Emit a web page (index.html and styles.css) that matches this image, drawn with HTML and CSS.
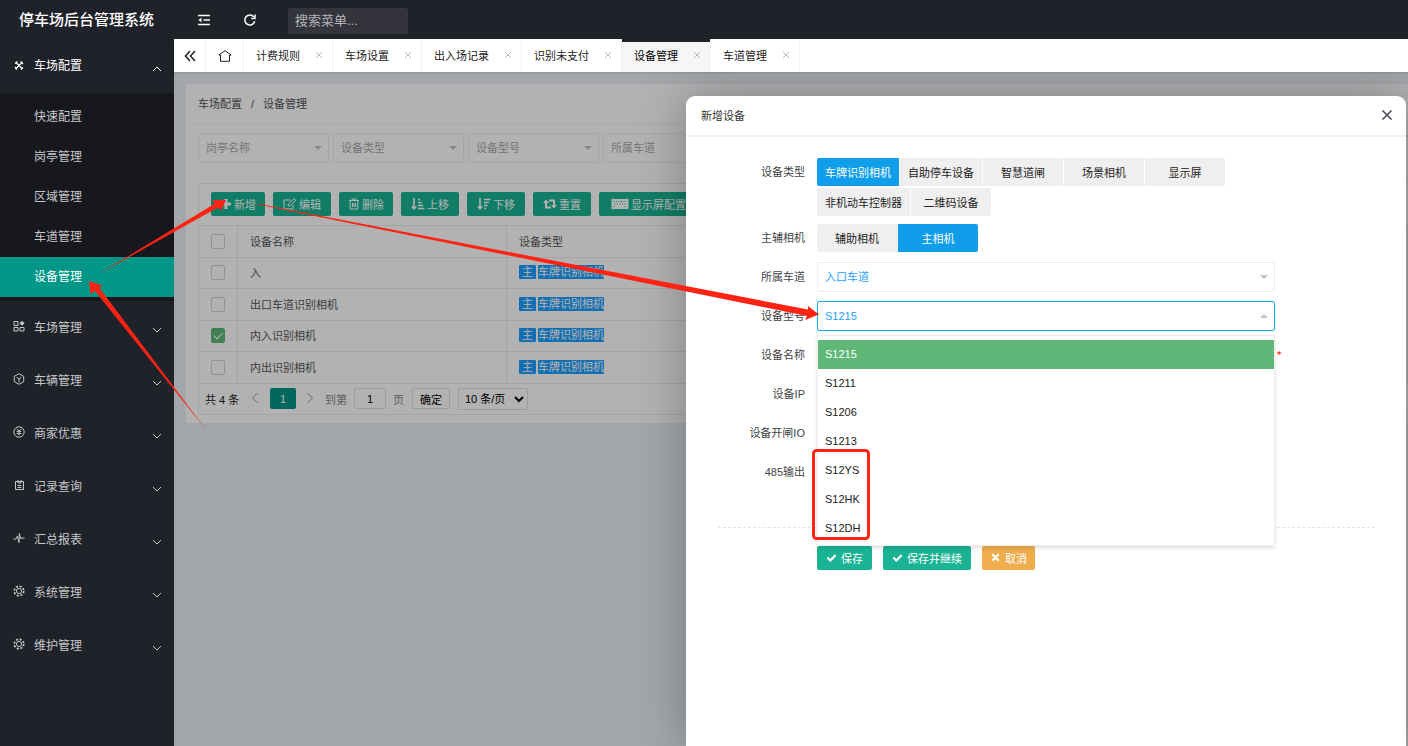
FILE: index.html
```html
<!DOCTYPE html>
<html lang="zh-CN">
<head>
<meta charset="utf-8">
<meta name="viewport" content="width=device-width, initial-scale=1">
<title>停车场后台管理系统</title>
<link rel="stylesheet" href="styles.css">
</head>
<body>
<svg class="defs" aria-hidden="true">
  <symbol id="i-down" viewBox="0 0 10 10"><path d="M1 3l4 4 4-4"/></symbol>
  <symbol id="i-up" viewBox="0 0 10 10"><path d="M1 7l4-4 4 4"/></symbol>
  <symbol id="i-x" viewBox="0 0 10 10"><path d="M2 2l6 6M8 2l-6 6"/></symbol>
  <symbol id="i-gear" viewBox="0 0 12 12"><circle cx="6" cy="6" r="2.6"/><circle cx="6" cy="6" r="4.7" stroke-width="1.700" stroke-dasharray="2.100 1.590"/></symbol>
</svg>
<div class="app">
  <aside class="side">
    <h1 class="logo">停车场后台管理系统</h1>
    <nav>
      <ul class="menu">
        <li>
          <button class="item open"><svg class="ico" viewBox="0 0 12 12"><path d="M3 3.500l6.500 6.500M9.500 3L2.500 10M2 4.500l2.500-2M7.500 2.500l2.500 2.500M2 8l2 2.500M8 10.500l2-2" stroke-width="1.300"/></svg>车场配置<svg class="chev"><use href="#i-up"/></svg></button>
          <ul class="sub">
            <li><a href="#">快速配置</a></li>
            <li><a href="#">岗亭管理</a></li>
            <li><a href="#">区域管理</a></li>
            <li><a href="#">车道管理</a></li>
            <li><a href="#" class="on">设备管理</a></li>
          </ul>
        </li>
        <li><button class="item"><svg class="ico" viewBox="0 0 12 12"><path d="M1 1.500h4v4H1zM1 7.500h4v3.500H1zM7 7.500h4v3.500H7z"/><path d="M9 .8l2.500 2.500L9 5.800 6.500 3.300z" fill="currentColor" stroke="none"/></svg>车场管理<svg class="chev"><use href="#i-down"/></svg></button></li>
        <li><button class="item"><svg class="ico" viewBox="0 0 12 12"><path d="M6 .7l4.700 2.600v5.400L6 11.300 1.300 8.700V3.300zM3.500 4.300L6 6l2.500-1.700M6 6v3.300"/></svg>车辆管理<svg class="chev"><use href="#i-down"/></svg></button></li>
        <li><button class="item"><svg class="ico" viewBox="0 0 12 12"><circle cx="6" cy="6" r="5.200"/><path d="M3.800 2.800L6 5.200l2.200-2.400M6 5.200v4.300M3.600 5.600h4.800M3.600 7.500h4.800"/></svg>商家优惠<svg class="chev"><use href="#i-down"/></svg></button></li>
        <li><button class="item"><svg class="ico" viewBox="0 0 12 12"><path d="M2.500 2.500h8v8h-8zM5 1v3h3V1M4.500 6.500h4M4.500 8.500h4"/></svg>记录查询<svg class="chev"><use href="#i-down"/></svg></button></li>
        <li><button class="item"><svg class="ico" viewBox="0 0 12 12"><path d="M.500 7H3l1.500-3L6 10.500 6.300 1.500 8 7l1-1h2.500"/></svg>汇总报表<svg class="chev"><use href="#i-down"/></svg></button></li>
        <li><button class="item"><svg class="ico"><use href="#i-gear"/></svg>系统管理<svg class="chev"><use href="#i-down"/></svg></button></li>
        <li><button class="item"><svg class="ico"><use href="#i-gear"/></svg>维护管理<svg class="chev"><use href="#i-down"/></svg></button></li>
      </ul>
    </nav>
  </aside>

  <div class="main">
    <header class="top">
      <button class="top-btn" aria-label="收起菜单"><svg viewBox="0 0 14 12"><path d="M1 1.500h12M6.500 6H13M1 10.500h12" /><path d="M4.500 3.800v4.400L1.300 6z" fill="currentColor" stroke="none"/></svg></button>
      <button class="top-btn" aria-label="刷新"><svg viewBox="0 0 14 12"><path d="M10.800 2.900A5 5 0 1 0 11.700 7.300M12 .500v4H8.200"/></svg></button>
      <input class="search" type="text" placeholder="搜索菜单..." aria-label="搜索菜单">
    </header>
    <div class="tabs">
      <button class="tab-nav" aria-label="向左"><svg viewBox="0 0 12 12"><path d="M6 1L1.500 6 6 11M11 1L6.500 6l4.500 5" stroke-width="1.500"/></svg></button>
      <button class="tab-nav home" aria-label="首页"><svg viewBox="0 0 14 12"><path d="M.800 5L7 .700 13.200 5H11.500v6.300h-9V5z"/></svg></button>
      <a class="tab" href="#">计费规则<svg><use href="#i-x"/></svg></a>
      <a class="tab" href="#">车场设置<svg><use href="#i-x"/></svg></a>
      <a class="tab" href="#">出入场记录<svg><use href="#i-x"/></svg></a>
      <a class="tab" href="#">识别未支付<svg><use href="#i-x"/></svg></a>
      <a class="tab active" href="#">设备管理<svg><use href="#i-x"/></svg></a>
      <a class="tab" href="#">车道管理<svg><use href="#i-x"/></svg></a>
    </div>

    <div class="stage">
      <section class="card">
        <div class="crumb">车场配置<span>/</span>设备管理</div>
        <div class="card-body">
          <div class="filters">
            <label class="pick"><select aria-label="岗亭名称"><option>岗亭名称</option></select></label>
            <label class="pick"><select aria-label="设备类型"><option>设备类型</option></select></label>
            <label class="pick"><select aria-label="设备型号"><option>设备型号</option></select></label>
            <label class="pick"><select aria-label="所属车道"><option>所属车道</option></select></label>
          </div>
          <div class="grid-box">
            <div class="tools">
              <button class="btn"><svg viewBox="0 0 12 12"><path d="M6 1v10M1 6h10" stroke-width="3"/></svg>新增</button>
              <button class="btn wide"><svg viewBox="0 0 14 12"><path d="M10 7v4H1V2h6.500M5 8l.500-2.200L11 .800l1.800 1.600L7.200 7.600z"/></svg>编辑</button>
              <button class="btn"><svg viewBox="0 0 12 12"><path d="M1 2.500h10M4 2.500V1h4v1.500M2.200 2.500V11h7.600V2.500M4.500 5v4M6 5v4M7.500 5v4"/></svg>删除</button>
              <button class="btn wide"><svg viewBox="0 0 14 12"><path d="M3 0v10.500M.800 8.500L3 10.800l2.200-2.300M7 1.500h2M7 4.500h3.500M7 7.500h5M7 10.500h6.500" stroke-width="1.600"/></svg>上移</button>
              <button class="btn wide"><svg viewBox="0 0 14 12"><path d="M3 0v10.500M.800 8.500L3 10.800l2.200-2.300M7 1.500h6.500M7 4.500h5M7 7.500h3.500M7 10.500h2" stroke-width="1.600"/></svg>下移</button>
              <button class="btn wide"><svg viewBox="0 0 14 12"><path d="M3 4v5.500h5M11 8V2.500H6" stroke-width="2"/><path d="M0 5l3-3.500L6 5zM8 7h6l-3 3.500z" fill="currentColor" stroke="none"/></svg>重置</button>
              <button class="btn"><svg class="kbd" viewBox="0 0 18 12"><path d="M.500 1h17v10H.500z" fill="currentColor" stroke="none"/><path class="keys" d="M2.500 3.500h13M3.500 6h11M2.500 8.500h2M13.500 8.500h2" stroke-dasharray="1 1.500"/></svg>显示屏配置</button>
            </div>
            <table>
              <thead><tr><th class="c-check"><input type="checkbox" aria-label="全选"></th><th class="c-name">设备名称</th><th>设备类型</th></tr></thead>
              <tbody>
                <tr><td class="c-check"><input type="checkbox" aria-label="入"></td><td>入</td><td><span class="tag">主</span><span class="tag">车牌识别相机</span></td></tr>
                <tr><td class="c-check"><input type="checkbox" aria-label="出口车道识别相机"></td><td>出口车道识别相机</td><td><span class="tag">主</span><span class="tag">车牌识别相机</span></td></tr>
                <tr><td class="c-check"><input type="checkbox" checked aria-label="内入识别相机"></td><td>内入识别相机</td><td><span class="tag">主</span><span class="tag">车牌识别相机</span></td></tr>
                <tr><td class="c-check"><input type="checkbox" aria-label="内出识别相机"></td><td>内出识别相机</td><td><span class="tag">主</span><span class="tag">车牌识别相机</span></td></tr>
              </tbody>
            </table>
            <div class="pager">
              <span class="total">共 4 条</span>
              <button class="arrow" aria-label="上一页"><svg viewBox="0 0 10 12"><path d="M7.500 1l-5 5 5 5"/></svg></button>
              <button class="page">1</button>
              <button class="arrow" aria-label="下一页"><svg viewBox="0 0 10 12"><path d="M2.500 1l5 5-5 5"/></svg></button>
              <label class="goto">到第<input type="text" value="1">页</label>
              <button class="ok">确定</button>
              <select class="size" aria-label="每页条数"><option>10 条/页</option></select>
            </div>
          </div>
        </div>
      </section>

      <div class="shade"></div>

      <div class="modal" role="dialog" aria-labelledby="dlg-title">
        <div class="modal-head"><h2 id="dlg-title">新增设备</h2><button class="close" aria-label="关闭"><svg viewBox="0 0 12 12"><path d="M1.500 1.500l9 9M10.500 1.500l-9 9"/></svg></button></div>
        <form class="modal-body">
          <div class="row">
            <span class="label">设备类型</span>
            <div class="opts" role="group" aria-label="设备类型">
              <button type="button" class="opt on">车牌识别相机</button><button type="button" class="opt">自助停车设备</button><button type="button" class="opt">智慧道闸</button><button type="button" class="opt">场景相机</button><button type="button" class="opt">显示屏</button><button type="button" class="opt">非机动车控制器</button><button type="button" class="opt">二维码设备</button>
            </div>
          </div>
          <div class="row">
            <span class="label">主辅相机</span>
            <div class="opts" role="group" aria-label="主辅相机"><button type="button" class="opt">辅助相机</button><button type="button" class="opt on">主相机</button></div>
          </div>
          <div class="row mid">
            <label class="label" for="lane">所属车道</label>
            <div class="pick value"><select id="lane"><option>入口车道</option></select></div>
          </div>
          <div class="row mid">
            <label class="label" for="model">设备型号</label>
            <div class="pick value opened">
              <input id="model" type="text" value="S1215" readonly>
              <ul class="drop" role="listbox" aria-label="设备型号">
                <li role="option" aria-selected="true" class="on">S1215</li>
                <li role="option">S1211</li>
                <li role="option">S1206</li>
                <li role="option">S1213</li>
                <li role="option">S12YS</li>
                <li role="option">S12HK</li>
                <li role="option">S12DH</li>
              </ul>
            </div>
          </div>
          <div class="row mid"><label class="label" for="name">设备名称</label><input class="text" id="name" type="text"><span class="must">*</span></div>
          <div class="row mid"><label class="label" for="ip">设备IP</label><input class="text" id="ip" type="text"></div>
          <div class="row mid"><label class="label" for="io">设备开闸IO</label><input class="text" id="io" type="text"></div>
          <div class="row mid"><label class="label" for="out">485输出</label><input class="text" id="out" type="text"></div>
          <hr>
          <div class="actions">
            <button type="button" class="btn"><svg viewBox="0 0 12 12"><path d="M1.500 6l3.200 3.200L10.500 3.400" stroke-width="2.400"/></svg>保存</button>
            <button type="button" class="btn"><svg viewBox="0 0 12 12"><path d="M1.500 6l3.200 3.200L10.500 3.400" stroke-width="2.400"/></svg>保存并继续</button>
            <button type="button" class="btn warn"><svg viewBox="0 0 12 12"><path d="M2.500 2.500l7 7M9.500 2.500l-7 7" stroke-width="2.400"/></svg>取消</button>
          </div>
        </form>
      </div>
    </div>
  </div>

  <svg class="notes" aria-hidden="true">
    <path d="M97 275L215 203.500L212 200L226 200L221 210.500L218 207.500z"/>
    <path d="M207 431L95 291L90.500 294L89 281L102 285.500L99.500 288z"/>
    <path d="M258 203.700L808 309.500L808 306L819 314.500L805 320L807 316L258 204.500z"/>
    <rect x="813.500" y="450.500" width="55" height="88" rx="3"/>
  </svg>
</div>
</body>
</html>
```
FILE: styles.css
```css
* { box-sizing: border-box; }
body, h1, h2, ul { margin: 0; padding: 0; }
ul { list-style: none; }
body, button, input, select {
  font-family: "Liberation Sans", "Noto Sans CJK SC", sans-serif;
  font-size: 11px;
}
button { border: 0; padding: 0; background: none; color: inherit; cursor: pointer; }
a { color: inherit; text-decoration: none; }
svg { fill: none; stroke: currentColor; stroke-width: 1; flex: none; }
.defs { position: absolute; width: 0; height: 0; }

.app { position: relative; display: flex; min-height: 100vh; }

/* sidebar */
.side { width: 174px; flex: none; background: #20222a; color: #c6c7c9; }
.logo { height: 39px; padding-left: 19px; font-size: 15px; font-weight: 500; line-height: 39px; color: #fff; white-space: nowrap; box-shadow: 0 1px 2px rgba(0, 0, 0, .2); }
.item { display: flex; align-items: center; width: 100%; height: 53px; padding: 0 12px 3px 13px; font-size: 12px; }
.item.open { height: 54px; color: #fff; }
.ico { width: 12px; height: 12px; margin-right: 9px; }
.chev { width: 10px; height: 10px; margin: 8px 0 0 auto; }
.sub { padding: 4px 0; background: #16181d; }
.sub a { display: block; height: 40px; padding-left: 34px; font-size: 12px; line-height: 40px; }
.sub .on { background: #009688; color: #fff; }

/* top bar */
.main { flex: 1; min-width: 0; display: flex; flex-direction: column; }
.top { display: flex; align-items: center; height: 39px; padding-left: 7px; background: #20222a; color: #fff; }
.top-btn { width: 46px; height: 39px; display: flex; align-items: center; justify-content: center; }
.top-btn svg { width: 14px; height: 12px; stroke-width: 1.5; }
.search { width: 120px; height: 26px; margin: 2px 0 0 15px; padding: 0 7px; border: 0; border-radius: 3px; background: #33343c; color: #fff; font-size: 13px; }
.search::placeholder { color: #b4b4b8; }

.tabs { position: relative; z-index: 2; display: flex; height: 33px; background: #fff; color: #222; box-shadow: 0 1px 2px rgba(0, 0, 0, .15); }
.tab-nav { display: flex; align-items: center; justify-content: center; width: 32px; border-right: 1px solid #f2f2f2; }
.tab-nav svg { width: 12px; height: 12px; }
.tab-nav.home { width: 38px; }
.tab-nav.home svg { width: 14px; }
.tab { display: flex; align-items: center; padding: 0 8px 1px 12px; border-right: 1px solid #f2f2f2; }
.tab svg { width: 10px; height: 10px; margin-left: 14px; color: #bbb; }
.tab.active { background: #f6f6f6; color: #000; box-shadow: inset 0 3px #20222a; }

/* page */
.stage { position: relative; flex: 1; padding: 12px 0 0 12px; background: #eaf0f5; overflow: hidden; }
.card { background: #fff; border-radius: 2px; color: #555; }
.crumb { height: 41px; padding-left: 12px; border-bottom: 1px solid #f4f4f4; line-height: 40px; }
.crumb span { padding: 0 9px; }
.card-body { padding: 8px 0 8px 12px; }
.filters { display: flex; gap: 4px; margin-bottom: 20px; }
.filters .pick { width: 131px; color: #aaa; }

.pick { position: relative; display: block; height: 30px; }
.pick select, .pick input, .text { width: 100%; height: 30px; padding: 0 7px; border: 1px solid #eee; border-radius: 2px; background: #fff; color: inherit; appearance: none; outline: 0; }
.pick::after { content: ""; position: absolute; right: 7px; top: 13px; border: 4px solid transparent; border-top-color: #c2c2c2; border-bottom: 0; pointer-events: none; }

.grid-box { border: 1px solid #ececec; border-width: 1px 0 0 1px; }
.tools { display: flex; gap: 8px; height: 41px; padding: 8px 12px; }
.btn { display: inline-flex; align-items: center; justify-content: center; gap: 4px; height: 24px; padding: 0 9px; border-radius: 2px; background: #1ab394; color: #fff; white-space: nowrap; }
.btn svg { width: 11px; height: 11px; }
.tools .btn { gap: 2px; }
.tools .btn svg { width: 12px; height: 12px; }
.tools .wide { padding: 0 10px; }
.tools .wide svg { width: 14px; }
.tools .btn .kbd { width: 18px; }
.tools .btn:last-child { padding: 0 12px; }
.keys { stroke: #1ab394; }

table { width: 100%; border-collapse: separate; border-spacing: 0; }
th, td { height: 31px; padding: 0 12px 2px; border-top: 1px solid #ececec; border-right: 1px solid #ececec; font-weight: 400; text-align: left; }
thead th, tbody tr:nth-child(even) td { height: 32px; }
.c-check { width: 39px; padding-bottom: 1px; }
.c-name { width: 269px; }
td input, th input { display: block; width: 14px; height: 15px; margin: 0; appearance: none; border: 1px solid #d2d2d2; border-radius: 2px; }
td input:checked { display: grid; place-items: center; border-color: #5fb878; background: #5fb878; }
td input:checked::before { content: ""; width: 8px; height: 4px; margin-bottom: 3px; border: solid #fff; border-width: 0 0 1px 1px; transform: rotate(-45deg); }
.tag { display: inline-block; height: 14px; margin-right: 2px; padding: 0; border-radius: 1px; background: #1e9fff; color: #fff; line-height: 14px; }
.tag:first-child { padding: 0 3px; }

.pager { display: flex; align-items: center; height: 32px; padding: 0 0 1px 6px; border-top: 1px solid #ececec; border-bottom: 1px solid #ececec; color: #999; }
.total { width: 45px; color: #222; }
.arrow { width: 20px; height: 20px; text-align: left; }
.arrow svg { width: 10px; height: 12px; }
.page { width: 26px; height: 21px; margin-right: 9px; border-radius: 2px; background: #009688; color: #fff; }
.goto { display: flex; align-items: center; gap: 7px; color: #888; }
.goto input { width: 32px; height: 21px; padding: 0; border: 1px solid #e2e2e2; border-radius: 2px; text-align: center; }
.ok { width: 38px; height: 21px; margin: 0 8px; border: 1px solid #e2e2e2; border-radius: 2px; color: #000; }
.size { width: 70px; height: 22px; padding: 0 2px; border: 1px solid #e2e2e2; border-radius: 2px; background: #fff; color: #000; }

/* dialog */
.shade { position: absolute; inset: 0; background: rgba(0, 0, 0, .3); }
.modal { position: absolute; top: 24px; right: 2px; bottom: 0; width: 720px; border-radius: 9px 9px 0 0; background: #fff; box-shadow: 1px 1px 50px rgba(0, 0, 0, .3); color: #333; }
.modal-head { display: flex; align-items: center; justify-content: space-between; height: 41px; padding: 0 13px 2px 15px; border-bottom: 2px solid #f0f0f0; }
.modal-head h2 { font-size: 11px; font-weight: 400; }
.close svg { display: block; width: 12px; height: 12px; stroke-width: 1.5; color: #445; }
.modal-body { display: flex; flex-direction: column; gap: 9px; padding: 21px 31px 0 32px; }
.row { display: grid; grid-template-columns: 87px 458px auto; column-gap: 12px; align-items: start; }
.row.mid { align-items: center; }
.label { line-height: 29px; text-align: right; color: #444; }
.opts { display: flex; flex-wrap: wrap; gap: 2px 1px; }
.opt { min-width: 80px; height: 28px; padding: 0 8px 1px; background: #efefef; color: #222; }
.row:not(.mid) { margin-bottom: -1px; }
.opt:first-child { border-radius: 2px 0 0 2px; }
.opt:last-child { border-radius: 0 2px 2px 0; }
.opt.on { background: #109eea; color: #fff; }
.row.mid:nth-child(3) { margin-top: 1px; }
.value { color: #1e9fff; }
.opened input { border-color: #16adf5; }
.opened::after { transform: rotate(180deg); }
.drop { position: absolute; z-index: 3; top: 34px; left: 0; right: 0; padding: 4px 0 2px; border: 1px solid #eee; background: #fff; box-shadow: 0 2px 4px rgba(0, 0, 0, .12); color: #222; }
.drop li { height: 29px; padding: 0 7px; line-height: 28px; }
.drop .on { background: #5fb878; color: #fff; }
.must { margin-left: -10px; color: #f00; }
hr { width: 100%; height: 0; margin: 31px 0 9px; border: 0; border-top: 1px dashed #e4e4e4; }
.actions { display: flex; gap: 11px; padding-left: 99px; }
.actions .btn { padding-bottom: 1px; }
.btn.warn { padding: 0 8px 1px; background: #f0ad4e; }

/* callout marks above the page */
.notes { position: absolute; inset: 0; width: 100%; height: 100%; z-index: 9; pointer-events: none; stroke: none; fill: #ff2313; }
.notes rect { fill: none; stroke: #ff2313; stroke-width: 3; }
```
